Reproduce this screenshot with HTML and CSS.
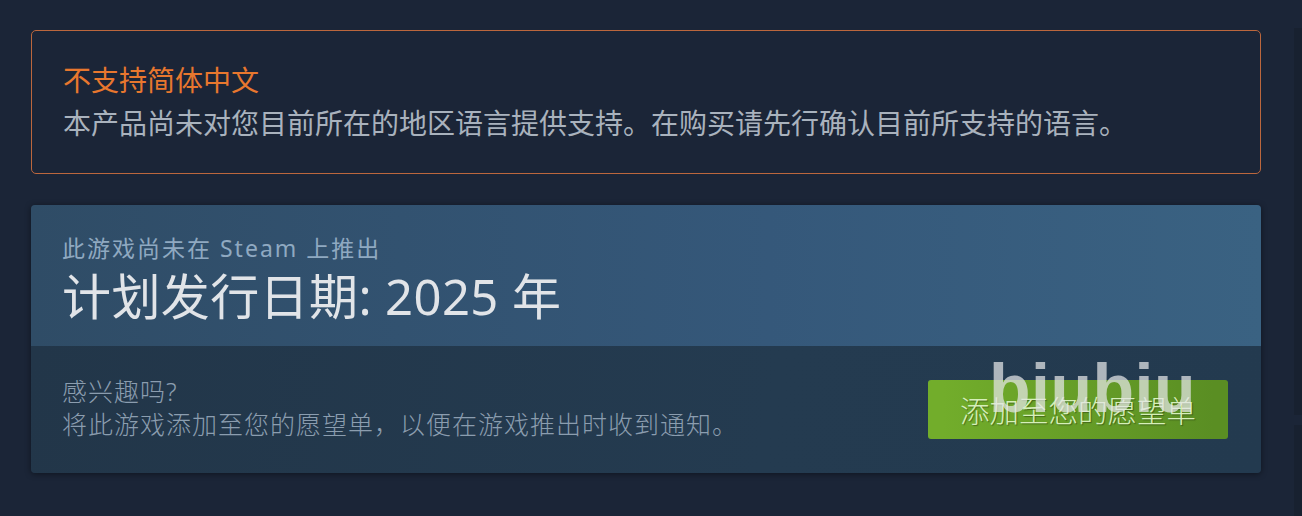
FILE: index.html
```html
<!DOCTYPE html>
<html lang="zh-CN">
<head>
<meta charset="utf-8">
<title>Steam</title>
<link rel="stylesheet" href="styles.css">
</head>
<body>
<div class="page">
  <main class="main">
    <section class="notice">
      <div class="notice-title">不支持简体中文</div>
      <div class="notice-text">本产品尚未对您目前所在的地区语言提供支持。在购买请先行确认目前所支持的语言。</div>
    </section>
    <section class="soon">
      <div class="soon-head">
        <div class="soon-sub">此游戏尚未在 Steam 上推出</div>
        <h1 class="soon-date">计划发行日期: 2025 年</h1>
      </div>
      <div class="soon-body">
        <div class="soon-text">
          <div>感兴趣吗?</div>
          <div>将此游戏添加至您的愿望单，以便在游戏推出时收到通知。</div>
        </div>
        <a class="btn-green">添加至您的愿望单</a>
      </div>
    </section>
  </main>
  <aside class="side">
    <div class="side-block side-a"></div>
    <div class="side-block side-b"></div>
  </aside>
</div>
<div class="watermark">biubiu</div>
</body>
</html>
```

FILE: styles.css
```css
html, body {
  margin: 0;
  padding: 0;
}
body {
  background: #1b2537;
  width: 1302px;
  height: 516px;
  overflow: hidden;
  position: relative;
  font-family: "Noto Sans", "Noto Sans CJK SC", sans-serif;
}
.page {
  display: flex;
  gap: 33px;
  padding: 30px 0 0 31px;
}
.main {
  width: 1230px;
  flex: none;
  display: flex;
  flex-direction: column;
  gap: 31px;
}
.notice {
  border: 1px solid #bc673d;
  border-radius: 5px;
  padding: 28px 31px 28px 31px;
  height: 86px;
}
.notice-title {
  color: #e8772e;
  font-size: 28px;
  line-height: 43px;
}
.notice-text {
  color: #a9b2bd;
  font-size: 28px;
  line-height: 43px;
  white-space: nowrap;
}
.soon {
  border-radius: 4px;
  overflow: hidden;
  box-shadow: 0 1px 6px rgba(0, 0, 0, 0.45);
}
.soon-head {
  height: 141px;
  box-sizing: border-box;
  padding: 29px 31px 0 31px;
  background: linear-gradient(90deg, #2f4c66 0%, #35587a 60%, #3a6282 100%);
}
.soon-sub {
  color: #8fa9c1;
  font-size: 23px;
  letter-spacing: 2px;
  line-height: 28px;
  margin-bottom: 6px;
}
.soon-date {
  margin: 0;
  color: #e1e4e8;
  font-size: 49px;
  font-weight: 400;
  letter-spacing: 0.4px;
  line-height: 56px;
}
.soon-body {
  height: 127px;
  box-sizing: border-box;
  padding: 0 33px 0 31px;
  display: flex;
  align-items: center;
  justify-content: space-between;
  background: linear-gradient(100deg, #223649 0%, #243b50 60%, #233a4f 100%);
}
.soon-text {
  color: #8b9daf;
  font-size: 25px;
  font-weight: 300;
  letter-spacing: 1px;
  line-height: 33px;
  margin-top: -4px;
}
.btn-green {
  width: 300px;
  height: 59px;
  box-sizing: border-box;
  border-radius: 3px;
  padding-left: 32px;
  display: flex;
  align-items: center;
  background: linear-gradient(90deg, #72ad2b 5%, #5a8e23 95%);
  color: #d6efb9;
  font-size: 29.5px;
  font-weight: 300;
  text-shadow: 1px 1px 1px rgba(0, 0, 0, 0.35);
  white-space: nowrap;
}
.side {
  flex: none;
  width: 40px;
  display: flex;
  flex-direction: column;
  gap: 10px;
  margin-top: -2px;
}
.side-block {
  background: #182130;
}
.side-a {
  height: 387px;
}
.side-b {
  height: 100px;
}
.watermark {
  position: absolute;
  left: 989px;
  top: 354px;
  font-family: "Liberation Sans", Arial, sans-serif;
  font-weight: 700;
  font-size: 68px;
  line-height: 68px;
  color: rgba(228, 230, 232, 0.72);
  letter-spacing: 0.5px;
}
```
